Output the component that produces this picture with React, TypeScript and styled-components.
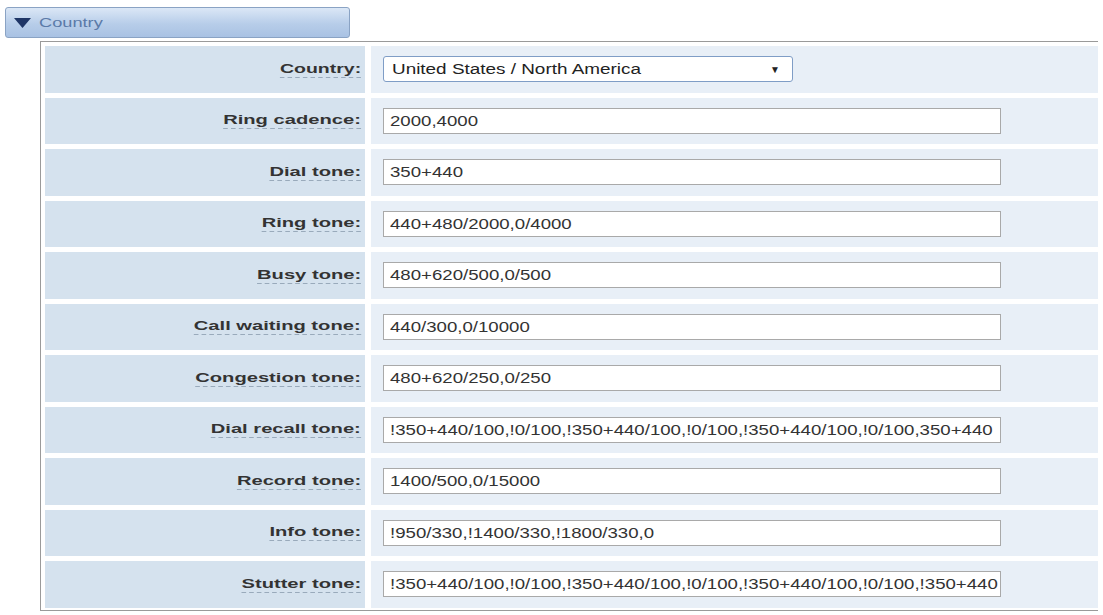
import React from "react";
import styled, { createGlobalStyle } from "styled-components";

const Global = createGlobalStyle`
  body { margin: 0; background: #fff; font-family: "Liberation Sans", Arial, sans-serif; }
`;

const Page = styled.div`
  padding: 7px 0 0 5px;
  width: 1103px;
  box-sizing: border-box;
`;

const Header = styled.div`
  width: 345px;
  height: 31px;
  box-sizing: border-box;
  border: 1px solid #8aa3c4;
  border-radius: 3px;
  background: linear-gradient(#dbe7f6, #b7cde9 55%, #a9c2e3);
  display: flex;
  align-items: center;
  gap: 8px;
  padding-left: 8px;
  color: #5b7aa8;
  font-size: 13px;
`;

const Stretch = styled.span<{ $s: number; $o?: string }>`
  display: inline-block;
  transform: scaleX(${(p) => p.$s});
  transform-origin: ${(p) => p.$o || "left"} center;
  white-space: nowrap;
`;

const Panel = styled.div`
  margin: 3px 5px 0 35px;
  border: 1px solid #9a9a9a;
  border-right: none;
  padding: 4px 0 2px 4px;
  display: flex;
  flex-direction: column;
  gap: 5px;
`;

const Row = styled.div`
  display: flex;
  height: 46.5px;
  gap: 6px;
`;

const Label = styled.div`
  width: 320px;
  background: #d5e2ee;
  display: flex;
  align-items: center;
  justify-content: flex-end;
  padding-right: 4px;
  box-sizing: border-box;
  font-size: 13px;
  font-weight: bold;
  color: #333;
`;

const LabelText = styled(Stretch)`
  border-bottom: 1px dashed #9ab;
  padding-bottom: 1px;
`;

const Value = styled.div`
  flex: 1;
  background: #e8eff7;
  display: flex;
  align-items: center;
  padding-left: 12px;
`;

const Input = styled.div<{ $w: number }>`
  width: ${(p) => p.$w}px;
  height: 26px;
  box-sizing: border-box;
  border: 1px solid #a9a9a9;
  background: #fff;
  display: flex;
  align-items: center;
  padding: 0 6px;
  font-size: 14px;
  color: #333;
  white-space: nowrap;
  overflow: hidden;
`;

const Select = styled(Input)`
  border: 1px solid #7f9dc6;
  border-radius: 3px;
  justify-content: space-between;
  padding: 0 12px 0 8px;
  color: #222;
`;

const rows: [string, string][] = [
  ["Ring cadence:", "2000,4000"],
  ["Dial tone:", "350+440"],
  ["Ring tone:", "440+480/2000,0/4000"],
  ["Busy tone:", "480+620/500,0/500"],
  ["Call waiting tone:", "440/300,0/10000"],
  ["Congestion tone:", "480+620/250,0/250"],
  ["Dial recall tone:", "!350+440/100,!0/100,!350+440/100,!0/100,!350+440/100,!0/100,350+440"],
  ["Record tone:", "1400/500,0/15000"],
  ["Info tone:", "!950/330,!1400/330,!1800/330,0"],
  ["Stutter tone:", "!350+440/100,!0/100,!350+440/100,!0/100,!350+440/100,!0/100,!350+440"],
];

export default function App() {
  return (
    <Page>
      <Global />
      <Header>
        <svg width="17" height="10" viewBox="0 0 17 10">
          <path d="M0 0 L17 0 L8.5 10 Z" fill="#1e3566" />
        </svg>
        <Stretch $s={1.4}>Country</Stretch>
      </Header>
      <Panel>
        <Row>
          <Label><LabelText $s={1.5} $o="right">Country:</LabelText></Label>
          <Value>
            <Select $w={410}>
              <Stretch $s={1.35}>United States / North America</Stretch>
              <span style={{ fontSize: 10 }}>▼</span>
            </Select>
          </Value>
        </Row>
        {rows.map(([l, v]) => (
          <Row key={l}>
            <Label><LabelText $s={1.55} $o="right">{l}</LabelText></Label>
            <Value>
              <Input $w={618}><Stretch $s={1.33}>{v}</Stretch></Input>
            </Value>
          </Row>
        ))}
      </Panel>
    </Page>
  );
}
